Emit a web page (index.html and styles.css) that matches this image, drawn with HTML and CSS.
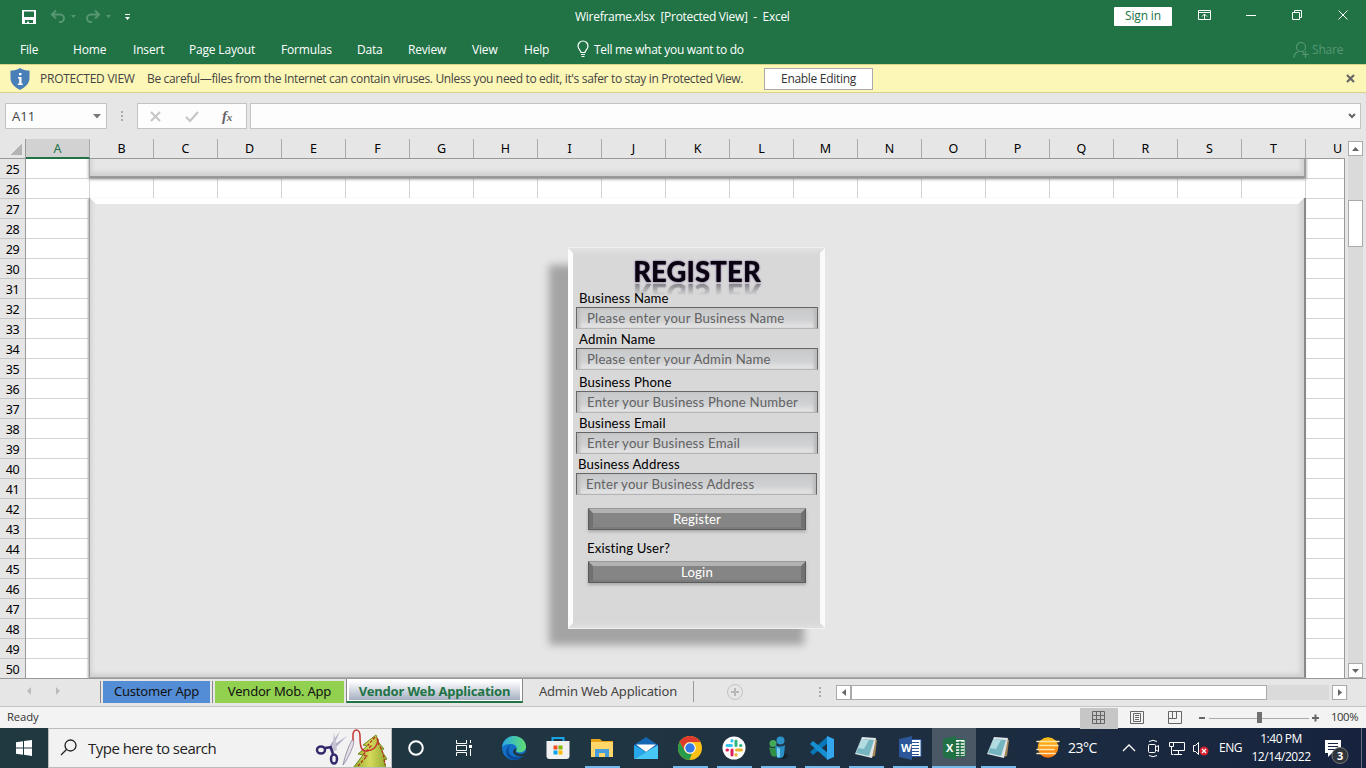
FILE: index.html
```html
<!DOCTYPE html>
<html lang="en">
<head>
<meta charset="utf-8">
<title>Wireframe.xlsx [Protected View] - Excel</title>
<link rel="stylesheet" href="styles.css">
</head>
<body>
<header class="titlebar">
  <svg class="quick" width="160" height="32" viewBox="0 0 160 32">
    <path fill="#fff" fill-rule="evenodd" d="M22 10h14v14H22zM24 11.500v5.500h10v-5.500zM25 20v3h2v-1.500h2V23h4v-3z"/>
    <g fill="none" stroke="#569673" stroke-width="2"><path d="M56 10.500L52 14.500l4 4M52 14.500h8a4 3.800 0 0 1 0 7.600h-1M95 10.500l4 4-4 4M99 14.500h-8a4 3.800 0 0 0 0 7.600h1"/></g>
    <path fill="#569673" d="M71 15h5l-2.500 3zM106 15h5l-2.500 3z"/>
    <path fill="#fff" d="M125 14h5v1h-5zM125 17h5l-2.500 3z"/>
  </svg>
  <div class="doc-title">Wireframe.xlsx&nbsp; [Protected View]&nbsp; -&nbsp; Excel</div>
  <button class="signin">Sign in</button>
  <svg width="194" height="32" viewBox="1172 0 194 32" fill="none" stroke="#fff">
    <path d="M1198.500 10.500h12v9h-12zM1198.500 12.500h12M1204.500 19v-5M1202 16.500l2.500-2.500 2.500 2.500M1246 15.500h10M1292.500 12.500h7v7h-7zM1294.500 12v-1.500h7v7H1300M1338.500 10.500l9 9M1347.500 10.500l-9 9"/>
  </svg>
</header>
<nav class="menu">
  <span>File</span><span>Home</span><span>Insert</span><span>Page Layout</span><span>Formulas</span><span>Data</span><span>Review</span><span>View</span><span>Help</span>
  <svg width="18" height="32" viewBox="0 0 18 32" fill="none" stroke="#fff" stroke-width="1.200"><path d="M4 19.500c0-2-3-3.200-3-6.500a5 5 0 0 1 10 0c0 3.300-3 4.500-3 6.500zM4 21.500h4M4.500 23.500h3"/></svg>
  <span class="tell">Tell me what you want to do</span>
  <span class="share"><svg width="17" height="18" viewBox="0 0 17 18" fill="none" stroke="#569673" stroke-width="1.200"><circle cx="8" cy="6" r="4.500"/><path d="M1 17c0-4 2.500-6 5-6.500M9 10.500l2 1.500M12.500 10v7M9 13.500h7"/></svg>Share</span>
</nav>
<div class="protected">
  <svg width="20" height="22" viewBox="0 0 20 22"><path fill="#497fb8" d="M10 0c3 2 6 2.500 9.500 2.500V10c0 5.500-4 9-9.500 12C4.500 19 .5 15.500.5 10V2.500C4 2.500 7 2 10 0z"/><path fill="#fff" d="M9 5h2.500v2.200H9zM8 9h3.500v6.500h1.200V17H7.800v-1.500h1.400v-5H8z"/></svg>
  <span class="pv">PROTECTED VIEW</span>
  <span class="warn">Be careful—files from the Internet can contain viruses. Unless you need to edit, it's safer to stay in Protected View.</span>
  <button class="enable">Enable Editing</button>
  <svg class="dismiss" width="10" height="10" viewBox="0 0 10 10"><path stroke="#666" stroke-width="2.200" d="M1 1l7 7M8 1L1 8"/></svg>
</div>
<div class="formula">
  <div class="namebox"><span>A11</span><svg width="8" height="5" viewBox="0 0 8 5"><path fill="#777" d="M0 0h8L4 4.500z"/></svg></div>
  <svg class="dots" width="30" height="26" viewBox="0 0 30 26"><path fill="#aaa" d="M14 8h2v2h-2zM14 12h2v2h-2zM14 16h2v2h-2z"/></svg>
  <div class="fx"><svg width="70" height="24" viewBox="0 0 70 24"><path fill="none" stroke="#c5c5c5" stroke-width="2" d="M13 8l9 9M22 8l-9 9M48 13l4 4 8-9"/></svg><i>f<small>x</small></i></div>
  <div class="fbar"><svg width="8" height="6" viewBox="0 0 8 6"><path fill="none" stroke="#666" stroke-width="2" d="M1 1l3 3 3-3"/></svg></div>
</div>
<main class="sheet">
  <div class="colheads"><span class="corner"></span><span class="sel">A</span><span>B</span><span>C</span><span>D</span><span>E</span><span>F</span><span>G</span><span>H</span><span>I</span><span>J</span><span>K</span><span>L</span><span>M</span><span>N</span><span>O</span><span>P</span><span>Q</span><span>R</span><span>S</span><span>T</span><span class="last">U</span></div>
  <div class="rows">
    <div class="rowheads"><span>25</span><span>26</span><span>27</span><span>28</span><span>29</span><span>30</span><span>31</span><span>32</span><span>33</span><span>34</span><span>35</span><span>36</span><span>37</span><span>38</span><span>39</span><span>40</span><span>41</span><span>42</span><span>43</span><span>44</span><span>45</span><span>46</span><span>47</span><span>48</span><span>49</span><span>50</span></div>
    <div class="cells">
      <div class="shape upper"></div>
      <div class="shape page"></div>
      <section class="card">
        <h1>REGISTER</h1>
        <div class="field"><label>Business Name</label><div class="input">Please enter your Business Name</div></div>
        <div class="field spaced"><label>Admin Name</label><div class="input">Please enter your Admin Name</div></div>
        <div class="field"><label>Business Phone</label><div class="input">Enter your Business Phone Number</div></div>
        <div class="field"><label>Business Email</label><div class="input">Enter your Business Email</div></div>
        <div class="field address"><label>Business Address</label><div class="input">Enter your Business Address</div></div>
        <div class="btn register">Register</div>
        <p>Existing User?</p>
        <div class="btn">Login</div>
      </section>
    </div>
  </div>
  <div class="vscroll">
    <span class="arrow"><svg width="7" height="4"><path fill="#666" d="M0 4h7L3.500 0z"/></svg></span>
    <span class="thumb"></span>
    <span class="arrow"><svg width="7" height="4"><path fill="#666" d="M0 0h7L3.500 4z"/></svg></span>
  </div>
</main>
<div class="tabs">
  <svg width="100" height="27" viewBox="0 0 100 27"><path fill="#bbb" d="M31 8v8l-4-4zM56 8v8l4-4z"/></svg>
  <div class="tab blue">Customer App</div>
  <div class="tab green">Vendor Mob. App</div>
  <div class="tab current"><b>Vendor Web Application</b></div>
  <div class="tab plain">Admin Web Application</div>
  <svg class="add" width="141" height="27" viewBox="694 679 141 27"><circle cx="735" cy="692" r="7.500" fill="none" stroke="#c3c3c3"/><path stroke="#b8b8b8" stroke-width="2" d="M731 692h8M735 688v8"/><path fill="#aaa" d="M819 687h2v2h-2zM819 691h2v2h-2zM819 695h2v2h-2z"/></svg>
  <div class="hscroll"><span class="harrow"><svg width="4" height="7"><path fill="#666" d="M4 0v7L0 3.500z"/></svg></span><span class="hthumb"></span><span class="harrow end"><svg width="4" height="7"><path fill="#666" d="M0 0v7l4-3.500z"/></svg></span></div>
</div>
<div class="status">
  <span class="ready">Ready</span>
  <svg width="250" height="22" viewBox="1080 706 250 22"><path fill="#c6c6c6" d="M1080 707h38v21h-38z"/><g fill="none" stroke="#666"><path d="M1092.500 710.500h12v12h-12zM1092.500 714.500h12M1092.500 718.500h12M1096.500 710.500v12M1100.500 710.500v12M1130.500 710.500h13v12h-13zM1133.500 712.500h7v8h-7zM1135 714.500h4M1135 716.500h4M1135 718.500h4M1168.500 710.500h13v12h-13zM1168.500 717.500h8v-7M1172.500 710.500v7"/><path stroke="#aaa" d="M1209 717.500h100"/><path stroke-width="2" d="M1199 717h6M1312 717h7M1315.500 713.500v7"/></g><path fill="#707070" d="M1257 711h5v11h-5z"/></svg>
  <span class="pct">100%</span>
</div>
<footer class="taskbar">
  <div class="start"><svg width="16" height="16" viewBox="0 0 16 16"><path fill="#fff" d="M0 2.200L7 1.200v6.300H0zM8 1l8-1v7.500H8zM0 8.500h7v6.300l-7-1zM8 8.500h8V16l-8-1.200z"/></svg></div>
  <div class="search">
    <svg width="18" height="18" viewBox="0 0 18 18" fill="none" stroke="#222" stroke-width="1.300"><circle cx="10.500" cy="6.500" r="5.500"/><path d="M6.500 10.500L1 16"/></svg>
    <span>Type here to search</span>
    <svg class="art" width="76" height="38" viewBox="315 729 76 38">
      <defs><linearGradient id="tree" x1="0" x2="1"><stop stop-color="#8eaa28"/><stop offset=".5" stop-color="#d5da5c"/><stop offset="1" stop-color="#91a82d"/></linearGradient></defs>
      <path fill="#aeadc2" d="M340 731l-8 18-4-1zM347 736l-18 12 2 4z"/><path fill="#c5c3d2" d="M334 732l3 18-5 2z"/>
      <g fill="none" stroke="#35296b" stroke-width="2.500"><ellipse cx="321" cy="750" rx="4" ry="3.500"/><ellipse cx="334" cy="759" rx="3" ry="4.500"/><path d="M325 748l7-1M331 748l2 6"/></g>
      <path fill="url(#tree)" stroke="#758b20" d="M376 735l-13 10 4 1-9 8 5 1-10 13h33l-2-8 3-1-6-9 3-1-5-6z"/>
      <path fill="none" stroke="#b6311f" stroke-width="1.300" stroke-dasharray="3 1.500" d="M375 737l-7 8 3 1-8 9 4 1-9 10M377 738l2 7 3 5 2 8 1 7"/>
      <path fill="none" stroke="#c43532" stroke-width="1.500" d="M353 742v-8c1-6 7-5 7 2 0 10 1 16 7 15 6-1 10-3 11-12"/>
      <path fill="#e2dee8" stroke="#8e8398" stroke-width=".8" d="M343 765c2-9 5-18 9-25 2 0 2 3 1 6-3 8-6 14-10 19z"/>
    </svg>
  </div>
  <div class="slot cortana"><svg width="18" height="18"><circle cx="9" cy="9" r="6.800" fill="none" stroke="#fff" stroke-width="2"/></svg></div>
  <div class="slot view"><svg width="18" height="16" viewBox="0 0 18 16" fill="none" stroke="#fff"><path d="M1.500 0v3.500h10V0M1.500 5.500h10v5h-10zM1.500 16v-3.500h10V16M15.500 0v3M15.500 9v7"/><path fill="#fff" stroke="none" d="M14 5h3v3h-3z"/></svg></div>
  <div class="slot"><svg width="24" height="24" viewBox="0 0 24 24"><defs><linearGradient id="eg" x2="1"><stop stop-color="#2aa8e8"/><stop offset="1" stop-color="#60df70"/></linearGradient></defs><circle cx="12" cy="12" r="12" fill="#1270c8"/><path fill="url(#eg)" d="M0 11C1 4 6 0 12 0c7 0 12 5 12 11 0 5-7 7-10 4 2-3 0-7-5-7-4 0-7 1-9 3z"/><path fill="#0b4a98" d="M9 9c-5 4-2 12 5 12 4 0 7-1 8-3-3 5-8 7-13 5C2 20 3 11 9 9z"/><path fill="#203742" d="M14 12c1 3-2 4 1 5 3 2 6 1 9-1l-1 3c-4 3-11 1-12-3 0-2 1-3 3-4z"/></svg></div>
  <div class="slot"><svg width="24" height="24" viewBox="0 0 24 24"><path d="M6.500 6V2h11v4" fill="none" stroke="#18a5ec" stroke-width="2"/><path d="M.5 5h23v15q0 3-3 3h-17q-3 0-3-3z" fill="#f1f1f1"/><path fill="#f25022" d="M7.500 9.500h4v4h-4z"/><path fill="#7fba00" d="M12.500 9.500h4v4h-4z"/><path fill="#00a4ef" d="M7.500 14.500h4v4h-4z"/><path fill="#ffb900" d="M12.500 14.500h4v4h-4z"/></svg></div>
  <div class="slot open"><svg width="24" height="20" viewBox="0 0 24 20"><path fill="#e8a419" d="M1 1h9l2 2h11v8H1z"/><path fill="#ffd66a" d="M1 4h22v15H1z"/><path fill="#4a9ddd" d="M5 11h14v8h-4v-4H9v4H5z"/></svg></div>
  <div class="slot"><svg width="24" height="22" viewBox="0 0 24 22"><path fill="#1266b2" d="M0 8L12 0l12 8v5H0z"/><path fill="#fff" d="M2 7.500h20L12 15z"/><path fill="#28a8ec" d="M0 8l12 7-12 7z"/><path fill="#47c7f5" d="M24 8v14H0z"/></svg></div>
  <div class="slot open"><svg width="24" height="24" viewBox="0 0 24 24"><circle cx="12" cy="12" r="12" fill="#fbc116"/><path fill="#de3b2d" d="M1.600 6A12 12 0 0 1 22.400 6H12a6 6 0 0 0-5.200 9z"/><path fill="#279b4b" d="M1.600 6l5.200 9A6 6 0 0 0 14 17.600L11.500 24A12 12 0 0 1 1.600 6z"/><circle cx="12" cy="12" r="5.800" fill="#fff"/><circle cx="12" cy="12" r="4.700" fill="#3478e5"/></svg></div>
  <div class="slot open"><svg width="24" height="24" viewBox="0 0 24 24"><circle cx="12" cy="12" r="11.500" fill="#fff"/><g fill="none" stroke-width="3" stroke-linecap="round"><path stroke="#36c5f0" d="M5 9.500h4.500M10 4.500v.5"/><path stroke="#2eb67d" d="M14 5v4.500M18.500 9.500h.5"/><path stroke="#ecb22e" d="M14.500 14h5M14 18.500v.5"/><path stroke="#e01e5a" d="M10 14v5M5 14h.5"/></g></svg></div>
  <div class="slot open"><svg width="24" height="24" viewBox="0 0 24 24"><ellipse cx="17" cy="20" rx="5" ry="3" fill="#16212b"/><circle cx="7" cy="7.500" r="3.500" fill="#45a957"/><path fill="#318e45" d="M3 11q4 2 8 0v9q-4 2-6-1z"/><circle cx="14.500" cy="4.500" r="4" fill="#2e93c9"/><path fill="#2a8fc4" d="M9 9q5 3 10 0l-1 10q-1 3-3 3h-4z"/><path fill="#72cdef" d="M11 11l3 2v8h-3z"/></svg></div>
  <div class="slot open"><svg width="24" height="24" viewBox="0 0 24 24"><path fill="#0877b8" d="M18 0v7L3 19l-3-3z"/><path fill="#168ed2" d="M0 8l3-3 15 12v7z"/><path fill="#32a7ee" d="M17 0l7 3v18l-7 3z"/></svg></div>
  <div class="slot open"><svg width="24" height="24" viewBox="0 0 24 24"><path fill="#a68758" d="M20 3l3 1-2 16-4 1z"/><path fill="#e0e6e8" d="M8 1l14 1-4 20-17-4z"/><path fill="#75b5c0" d="M8 3l12 1-5 16-13-3z"/><path fill="#b0dce2" d="M8 3l7 1-5 9-6-1z"/></svg></div>
  <div class="slot open"><svg width="24" height="24" viewBox="0 0 24 24"><path fill="#fff" stroke="#2b579a" d="M12 3.500h11v17H12z"/><path stroke="#2b579a" d="M14 6.500h7M14 9.500h7M14 12.500h7M14 15.500h7M14 18.500h7"/><path fill="#2b579a" d="M1 3L14 0v24L1 21z"/><text x="3" y="16" class="wordmark">W</text></svg></div>
  <div class="slot open active"><svg width="24" height="24" viewBox="0 0 24 24"><path fill="#fff" stroke="#207245" d="M12 3.500h11v17H12z"/><path stroke="#207245" stroke-width="1.500" d="M14 6.500h8M14 9.500h8M14 12.500h8M14 15.500h8M14 18.500h8M18 5v15"/><path fill="#207245" d="M1 3L14 0v24L1 21z"/><text x="4" y="16" class="wordmark">X</text></svg></div>
  <div class="slot open"><svg width="24" height="24" viewBox="0 0 24 24"><path fill="#a68758" d="M20 3l3 1-2 16-4 1z"/><path fill="#e0e6e8" d="M8 1l14 1-4 20-17-4z"/><path fill="#75b5c0" d="M8 3l12 1-5 16-13-3z"/><path fill="#b0dce2" d="M8 3l7 1-5 9-6-1z"/></svg></div>
  <div class="weather"><svg width="24" height="22" viewBox="0 0 24 22"><defs><linearGradient id="sun" y2="1" x2="0"><stop stop-color="#ffc21a"/><stop offset="1" stop-color="#f77516"/></linearGradient></defs><circle cx="12" cy="10.500" r="10.300" fill="url(#sun)"/><g stroke="#ffe7b0" stroke-width="1.500" stroke-linecap="round"><path d="M1 4.500h10M12 4.500h11M4 8.500h18M1 12.500h17M1 16.500h18"/></g></svg><span>23°C</span></div>
  <svg class="tray" width="98" height="40" viewBox="1116 728 98 40" fill="none" stroke="#fff"><path stroke-width="1.300" d="M1123 751l6-6 6 6"/><rect x="1148.500" y="744.500" width="7" height="8" rx="1"/><path d="M1156 747l2.500-1.500v6L1156 750M1149 741.500q4-2.500 8 0M1149 755.500q4 2.500 8 0M1173 742.500h11.500v8H1173M1174 754.500h8M1178.500 750.500v4M1169.500 742.500h4v4h-4zM1171.500 747v7.500h2M1193.500 745.500h2l3-3v12l-3-3h-2z"/><circle cx="1204" cy="751" r="4.500" fill="#d32330" stroke="none"/><path stroke-width="1.200" d="M1202 749l4 4M1206 749l-4 4"/></svg>
  <span class="lang">ENG</span>
  <div class="clock"><span>1:40 PM</span><span>12/14/2022</span></div>
  <svg width="52" height="40" viewBox="1314 728 52 40"><path fill="#fff" d="M1325 740h16v13h-9l-4 4v-4h-3z"/><path stroke="#17263e" d="M1328 743.500h10M1328 746.500h10M1328 749.500h10"/><circle cx="1340" cy="755.500" r="8" fill="#30353b" stroke="#777"/><text x="1340" y="760" class="count">3</text><path stroke="#65717e" d="M1361.500 728v40"/></svg>
</footer>
</body>
</html>
```

FILE: styles.css
```css
* { box-sizing: border-box; }
body { margin: 0; width: 1366px; height: 768px; overflow: hidden; background: #e6e6e6; font: 12px/16px "Open Sans", "Noto Sans", sans-serif; letter-spacing: -.15px; color: #444; }
svg { display: block; flex: none; }
button { font: inherit; letter-spacing: inherit; padding: 0; border: 0; background: #fff; }
span, .doc-title { white-space: nowrap; }

.titlebar { height: 32px; background: #217346; color: #fff; display: flex; align-items: center; }
.doc-title { margin-left: 415px; width: 539px; letter-spacing: -.28px; padding-top: 1px; }
.signin { width: 58px; height: 19px; color: #217346; border-radius: 1px; }

.menu { height: 32px; background: #217346; color: #fff; display: grid; grid-template-columns: 53px 60px 56px 92px 76px 51px 64px 52px 53px 17px 699px 60px; padding-left: 20px; align-items: center; line-height: 32px; }
.menu > span { padding-top: 2px; letter-spacing: -.18px; }
.menu .tell { letter-spacing: -.3px; font-weight: 500; }
.share { display: flex; align-items: center; gap: 2px; color: #569673; }

.protected { height: 29px; background: #fcf7b6; border-top: 1px solid #d8d58b; border-bottom: 1px solid #d8d58b; display: flex; align-items: center; padding-left: 10px; }
.pv { margin-left: 10px; width: 107px; font-weight: 500; letter-spacing: -.25px; }
.warn { width: 617px; letter-spacing: -.335px; }
.enable { width: 109px; height: 22px; border: 1px solid #aaa; color: #333; letter-spacing: -.3px; }
.dismiss { margin-left: auto; margin-right: 10px; }

.formula { height: 46px; display: flex; padding: 10px 5px 0; }
.namebox, .fx, .fbar { height: 26px; background: #fdfdfd; border: 1px solid #c3c3c3; display: flex; align-items: center; }
.namebox { width: 102px; justify-content: space-between; padding: 0 5px 0 6px; font-size: 13px; letter-spacing: 0; }
.fx { width: 110px; }
.fx i { font: italic bold 15px/20px "Liberation Serif", serif; color: #666; margin-left: 14px; }
.fx small { font-size: 11px; }
.fbar { margin-left: 3px; flex: 1; justify-content: flex-end; padding-right: 4px; }

.sheet { height: 539px; display: grid; grid-template: 20px 519px / 1345px 21px; }
.colheads { display: flex; font: 12.500px/19px "Noto Sans", sans-serif; letter-spacing: 0; color: #000; border-bottom: 1px solid #999; }
.colheads span { width: 64px; border-right: 1px solid #aaa; text-align: center; flex: none; }
.colheads .corner { width: 26px; border-right-color: #999; background: linear-gradient(135deg, transparent 50%, #b4b4b4 50%) 10px 4px / 12px 12px no-repeat; }
.colheads .sel { background: #d2d2d2; color: #217346; height: 20px; border-bottom: 2px solid #217346; }
.colheads .last { width: 39px; border: 0; padding-left: 24px; }
.rows { grid-row: 2; grid-column: 1; display: flex; overflow: hidden; }
.rowheads { width: 26px; border-right: 1px solid #999; font: 12.500px/21px "Noto Sans", sans-serif; letter-spacing: -.3px; color: #000; flex: none; }
.rowheads span { display: block; height: 20px; border-bottom: 1px solid #c6c6c6; text-align: center; }
.cells { position: relative; width: 1319px; overflow: hidden; border-right: 1px solid #999; background: repeating-linear-gradient(to right, transparent 0 63px, #d4d4d4 63px 64px), repeating-linear-gradient(to bottom, #fff 0 19px, #d4d4d4 19px 20px); }
.shape { position: absolute; left: 63px; width: 1217px; background: #e6e6e6; border: 1px solid #999; }
.upper { top: -10px; height: 29px; border-width: 0 2px 2px 1px; border-color: #8c8c8c #a0a0a0 #999; box-shadow: 0 1px 3px #888, inset -3px -4px 4px #d0d0d0, inset 3px 0 3px #d8d8d8; }
.page { top: 39px; height: 480px; border-width: 0 2px 1px 1px; border-color: #888 #888 #aaa #999; box-shadow: -1px 1px 2px #aaa, inset -4px -3px 4px #d0d0d0, inset 3px 0 3px #d8d8d8; }
.page::before { content: ""; display: block; border: solid transparent; border-width: 6px 6px 0; border-top-color: #fff; }

.card { position: absolute; left: 542px; top: 88px; width: 257px; height: 382px; padding: 12px 7px 0 8px; background: #d8d8d8; box-shadow: inset 0 6px 5px -2px #e4e4e4, inset 0 -5px 4px -2px #e2e2e2, -20px 17px 8px -1px #a4a4a4; color: #000; font: 13.200px/18px Lato, "Open Sans", sans-serif; letter-spacing: .13px; font-variant-ligatures: none; }
.card::before { content: ""; position: absolute; inset: 1px 0; border: 5px solid transparent; border-left-color: #fcfcfc; border-right-color: #fafafa; box-shadow: 0 -1px #f0f0f0, 0 1px #f0f0f0; }
.card h1 { margin: 0 0 4px; height: 26px; font: 900 27.500px/26px Lato, sans-serif; text-align: center; letter-spacing: .1px; color: #08030f; text-shadow: 0 0 2px #56357a; -webkit-box-reflect: below -4px linear-gradient(to bottom, transparent 45%, rgba(0, 0, 0, .5)); }
.field { height: 40px; margin-bottom: 1px; }
.spaced { margin-bottom: 3px; }
.field label { display: block; height: 18px; padding-left: 3px; }
.input { height: 22px; border: 1px solid #666; border-bottom-color: #b4b4b4; padding-left: 10px; line-height: 21px; letter-spacing: .2px; color: #626262; background: linear-gradient(#c8c9cb, #d0d1d3 60%, #e7e7e8); box-shadow: inset 4px 0 3px -1px #bdbdbd, inset -4px 0 3px -1px #bbb; }
.address { margin-left: -1px; width: 242px; }
.address .input { margin-left: 1px; padding-left: 9px; }
.btn { position: relative; margin: 0 12px 0 12px; height: 22px; line-height: 20px; text-align: center; color: #fff; background: #858585; border: 1px solid #5a5a5a; border-top-color: #999; box-shadow: 0 2px 3px #aaa; }
.btn::before { content: ""; position: absolute; inset: 0; border: 4px solid; border-color: #b2b2b2 #707070 #7b7b7b #707070; border-bottom-width: 2px; }
.register { margin-top: 13px; }
.card p { margin: 9px 0 4px 11px; height: 18px; }

.vscroll { grid-column: 2; grid-row: 1 / 3; margin: 2px 3px 0; background: #dadada; display: flex; flex-direction: column; height: 537px; }
.arrow { width: 15px; height: 15px; border: 1px solid #aaa; background: #fff; display: flex; align-items: center; justify-content: center; }
.thumb { width: 15px; height: 47px; margin: 44px 0 auto; border: 1px solid #aaa; background: #fff; }

.tabs { height: 29px; border-top: 1px solid #999; border-bottom: 1px solid #c4c4c4; display: flex; font: 13px/20px "Noto Sans", sans-serif; letter-spacing: -.2px; }
.tab { text-align: center; white-space: nowrap; flex: none; }
.blue, .green { height: 22px; margin-top: 2px; color: #111; background: #538dd5; }
.blue { width: 107px; margin-left: 3px; box-shadow: -2px 0 #e6e6e6, -3px 0 #888; }
.green { width: 129px; margin-left: 5px; background: #92d050; box-shadow: -2px 0 #e6e6e6, -3px 0 #888; }
.current { width: 177px; margin-left: 2px; height: 24px; padding: 2px 2px 1px; background: #fff; border: 1px solid #888; border-top: 0; border-bottom: 2px solid #217346; color: #217346; }
.current b { display: block; height: 19px; background: linear-gradient(#fff, #a6afc1); letter-spacing: -.17px; }
.plain { width: 171px; height: 21px; margin-top: 2px; border-right: 1px solid #999; }
.hscroll { width: 512px; height: 15px; margin: 6px 0 0 1px; display: flex; background: #dadada; }
.harrow { width: 15px; background: #fff; border: 1px solid #aaa; display: flex; align-items: center; justify-content: center; flex: none; }
.hthumb { width: 416px; border: 1px solid #aaa; background: #fff; }
.harrow.end { margin-left: auto; margin-right: 1px; box-shadow: -3px 0 #e6e6e6; }

.status { height: 21px; background: #f3f3f3; display: flex; align-items: center; color: #333; }
.ready { width: 1080px; padding: 0 0 2px 7px; font-size: 11.300px; }
.pct { font-size: 11.300px; letter-spacing: -.4px; padding: 0 0 2px 1px; }

.taskbar { height: 40px; background: linear-gradient(to right, #203840, #203542 45%, #1c2c40 75%, #17233e); display: flex; align-items: center; color: #fff; }
.start { width: 48px; display: flex; justify-content: center; }
.search { width: 344px; height: 40px; background: #f2f2f2; border: 1px solid #bbb; display: flex; align-items: center; padding-left: 11px; color: #222; font-size: 15px; letter-spacing: -.52px; }
.search span { margin-left: 10px; }
.art { margin-left: auto; }
.slot { width: 44px; height: 40px; display: flex; align-items: center; justify-content: center; flex: none; }
.cortana { width: 48px; }
.view { width: 52px; padding-right: 5px; }
.open { background: linear-gradient(#76b9ed, #76b9ed) center bottom / 35px 2px no-repeat; }
.active { background: linear-gradient(#76b9ed, #76b9ed) center bottom / 44px 2px no-repeat, #4a5865; }
.wordmark { font: bold 11px "Open Sans", sans-serif; fill: #fff; }
.weather { width: 96px; padding-left: 16px; display: flex; align-items: center; gap: 8px; font-size: 14px; letter-spacing: -.5px; }
.lang { margin-left: 5px; width: 29px; letter-spacing: -.5px; }
.clock { width: 66px; display: flex; flex-direction: column; align-items: center; line-height: 18px; letter-spacing: -.45px; }
.count { font: bold 11px "Open Sans", sans-serif; fill: #fff; text-anchor: middle; }
```
